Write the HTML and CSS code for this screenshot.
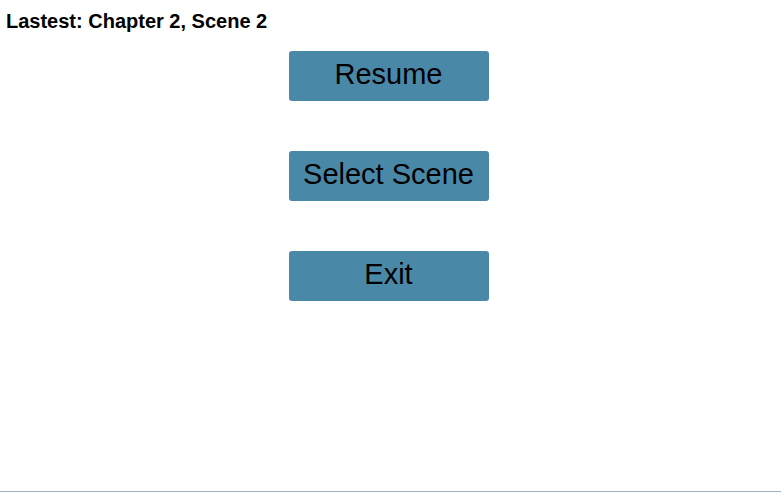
FILE: index.html
```html
<!DOCTYPE html>
<html lang="en">
<head>
    <meta charset="UTF-8">
    <title>Main Menu</title>
    <link rel="stylesheet" href="styles.css">
</head>
<body>
    <div class="screen">
        <div class="latest">Lastest: Chapter 2, Scene 2</div>

        <div class="menu">
            <button class="menu-btn">Resume</button>
            <button class="menu-btn">Select Scene</button>
            <button class="menu-btn">Exit</button>
        </div>
    </div>
</body>
</html>
```

FILE: styles.css
```css
* {
    margin: 0;
    padding: 0;
    box-sizing: border-box;
}

body {
    background: #fff;
    font-family: 'Liberation Sans', Arial, sans-serif;
    color: #000;
}

.screen {
    width: 781px;
    height: 492px;
    border-bottom: 1px solid #9fb2c2;
}

.latest {
    font-size: 20px;
    font-weight: 700;
    padding: 9px 0 0 6px;
    line-height: 24px;
}

.menu {
    display: flex;
    flex-direction: column;
    align-items: center;
    gap: 50px;
    margin-top: 18px;
    padding-right: 4px;
}

.menu-btn {
    width: 200px;
    height: 50px;
    padding-bottom: 4px;
    background-color: #4a88a7;
    border: none;
    border-radius: 3px;
    font-family: 'Liberation Sans', Arial, sans-serif;
    font-size: 29px;
    color: #000;
    cursor: pointer;
}

.menu-btn:hover {
    background-color: #3f7a98;
}
```
